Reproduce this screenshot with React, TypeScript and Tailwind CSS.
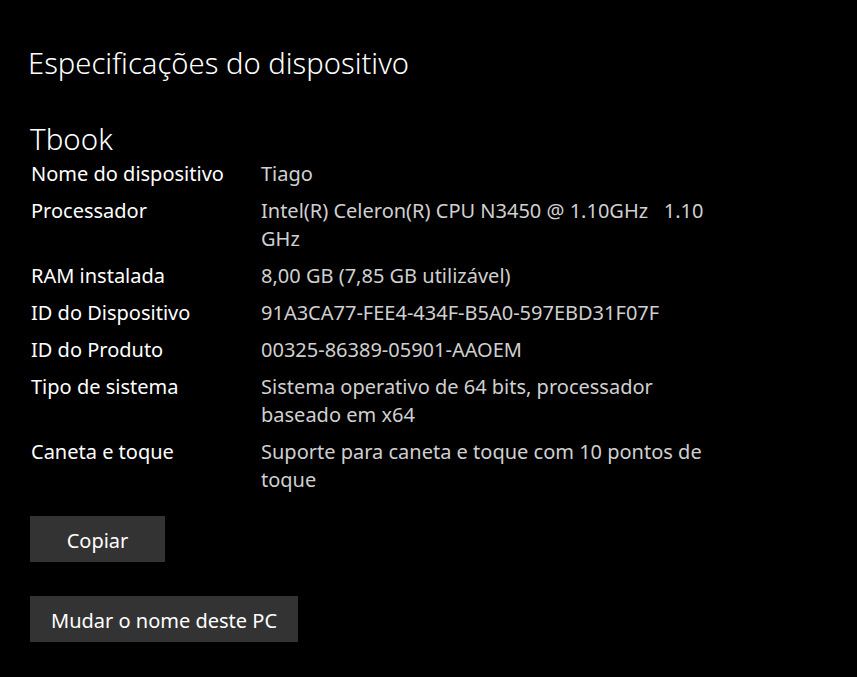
import React from 'react';

const specs: { label: string; value: string }[] = [
  { label: 'Nome do dispositivo', value: 'Tiago' },
  { label: 'Processador', value: 'Intel(R) Celeron(R) CPU N3450 @ 1.10GHz\u00a0\u00a0 1.10 GHz' },
  { label: 'RAM instalada', value: '8,00 GB (7,85 GB utilizável)' },
  { label: 'ID do Dispositivo', value: '91A3CA77-FEE4-434F-B5A0-597EBD31F07F' },
  { label: 'ID do Produto', value: '00325-86389-05901-AAOEM' },
  { label: 'Tipo de sistema', value: 'Sistema operativo de 64 bits, processador baseado em x64' },
  { label: 'Caneta e toque', value: 'Suporte para caneta e toque com 10 pontos de toque' },
];

const App = () => {
  return (
    <div
      className="min-h-[677px] w-full bg-black text-white pl-[28px] pt-[43px]"
      style={{ fontFamily: '"Noto Sans", "Open Sans", sans-serif' }}
    >
      <h1 className="text-[29.2px] leading-[40px] font-light">Especificações do dispositivo</h1>

      <p className="mt-[38px] pl-[2px] text-[29.5px] leading-[36px] font-light">Tbook</p>

      <div className="mt-[3px] pl-[3px] flex flex-col gap-[9px]">
        {specs.map((s) => (
          <div key={s.label} className="flex text-[20px] leading-[28px]">
            <div className="w-[230px] shrink-0 text-white">{s.label}</div>
            <div className="w-[450px] text-[#d0d0d0]">{s.value}</div>
          </div>
        ))}
      </div>

      {/* Actions */}
      <div className="mt-[22px] pl-[2px] flex flex-col items-start gap-[34px]">
        <button className="h-[46px] w-[135px] pt-[3px] bg-[#333333] text-[20px] text-white">Copiar</button>
        <button className="h-[46px] px-[21px] pt-[3px] bg-[#333333] text-[20px] text-white">Mudar o nome deste PC</button>
      </div>
    </div>
  );
};

export default App;
